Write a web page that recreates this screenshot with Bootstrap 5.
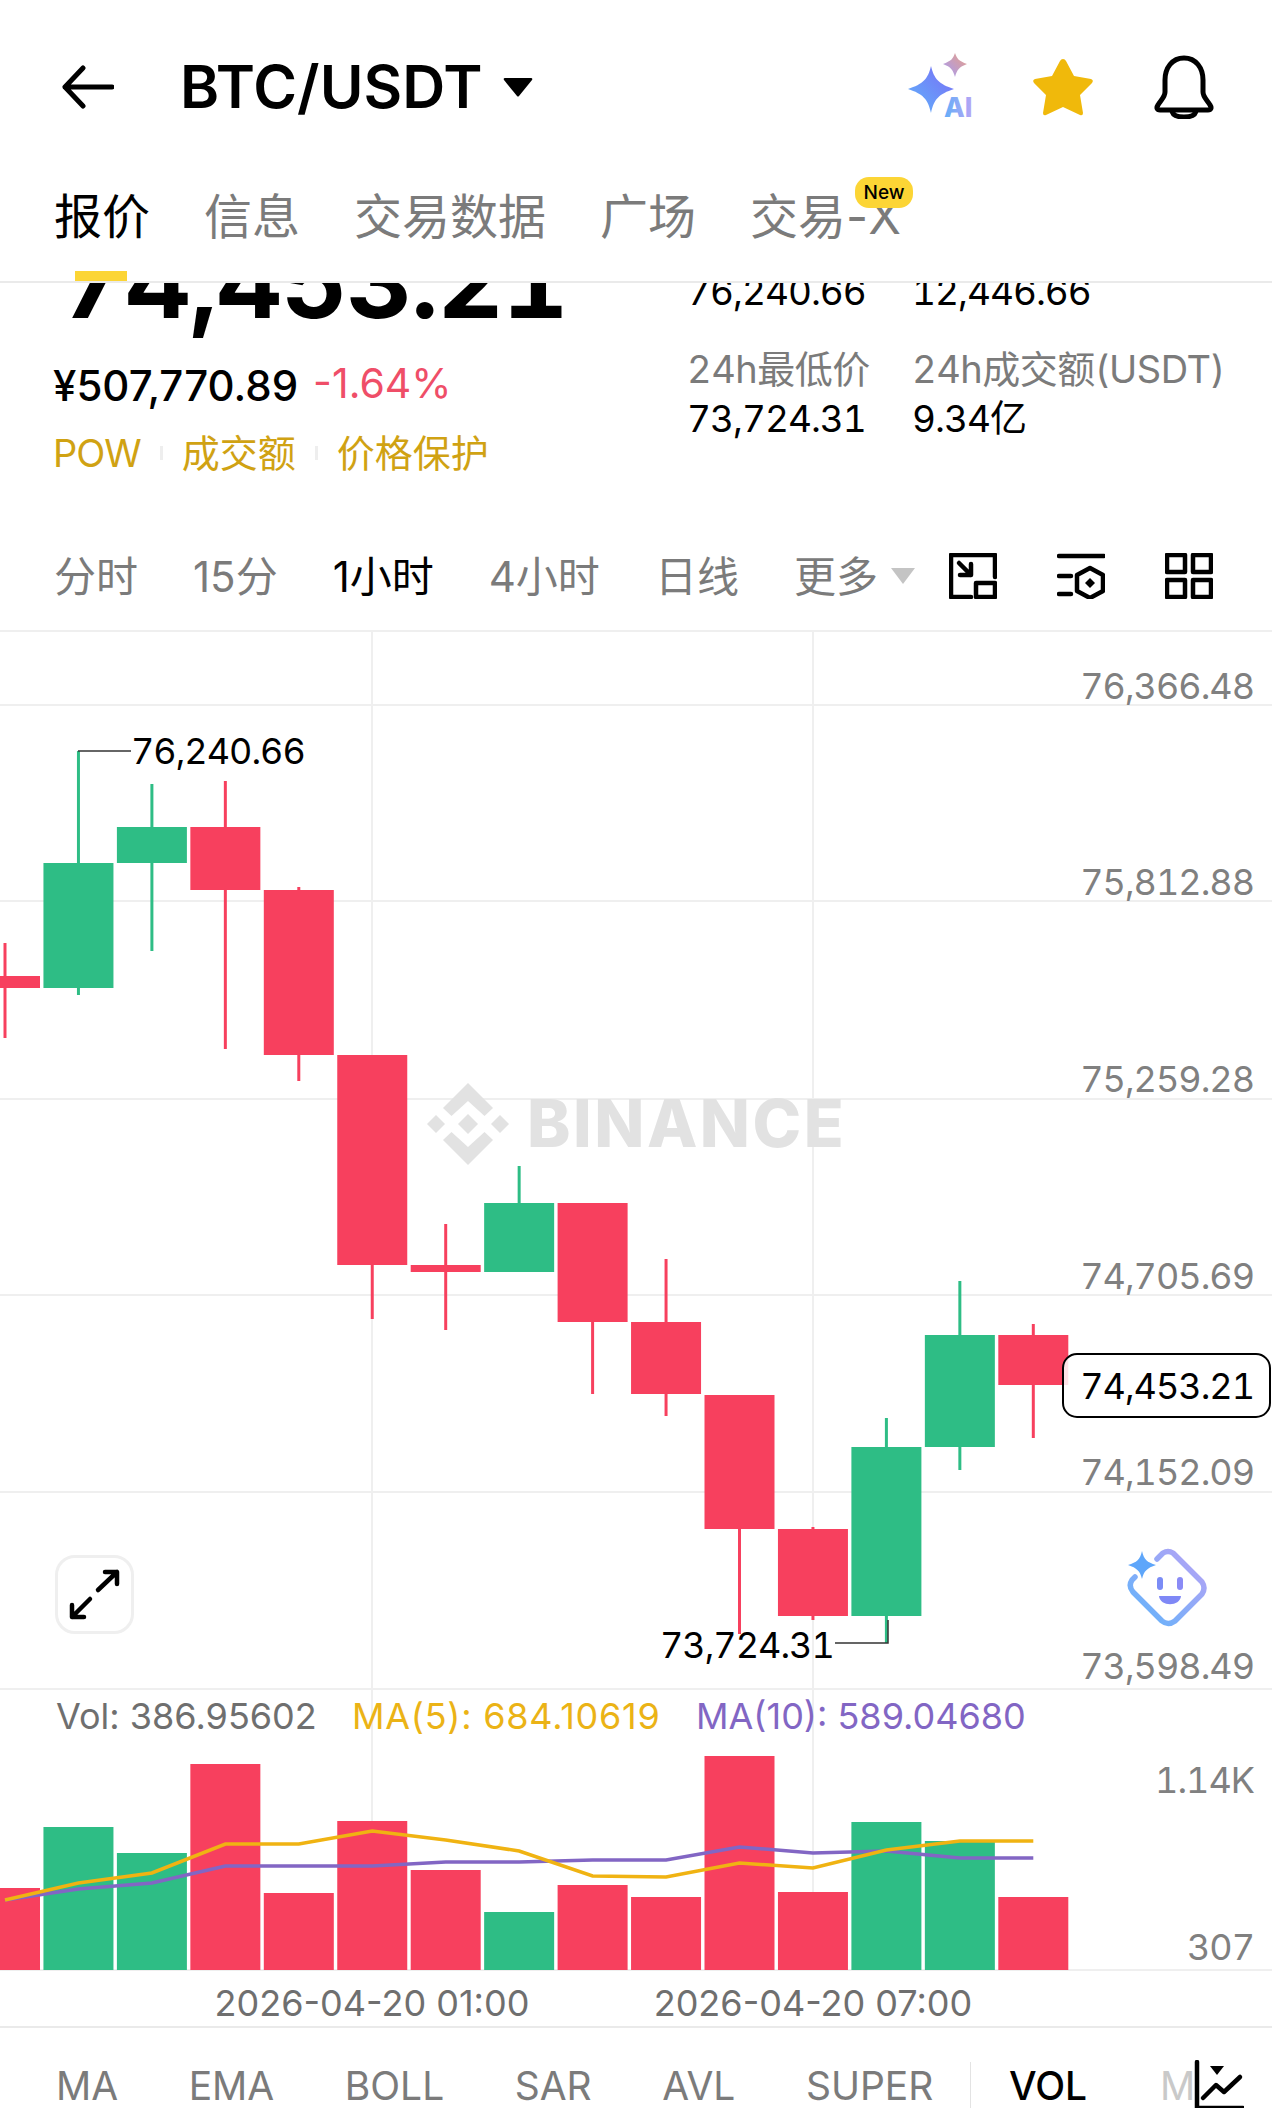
<!DOCTYPE html>
<html lang="zh">
<head>
    <meta charset="UTF-8">
    <meta name="viewport" content="width=device-width, initial-scale=1.0">
    <link href="https://cdn.jsdelivr.net/npm/bootstrap@5.3.3/dist/css/bootstrap.min.css" rel="stylesheet">
    <title>BTC/USDT</title>
    <style>
        body {
            width: 1272px;
            height: 2108px;
            overflow: hidden;
            background: #fff;
            color: #000;
            font-family: Inter, "Noto Sans CJK SC", sans-serif;
        }

        .top-bar { height: 174px; padding-left: 62px; position: relative; }
        .pair-title { font-size: 59.5px; font-weight: 600; margin-left: 66px; line-height: 1; }
        .pair-caret { margin-left: 19px; }
        .top-icons { position: absolute; right: 58px; top: 52px; gap: 60px; }
        .ai-icon { margin-right: -11px; }

        .tab-strip {
            height: 109px;
            padding: 0 54px 22px;
            gap: 54px;
            font-size: 48px;
            color: #7b7b7b;
            border-bottom: 2px solid #eaeaea;
            position: relative;
            background: #fff;
            z-index: 2;
        }
        .tab-strip .on { color: #000; }
        .tab-marker { position: absolute; left: 75px; bottom: 0; width: 52px; height: 10px; background: #fcd535; }
        .new-tag {
            position: absolute;
            left: 855px;
            top: 3px;
            width: 58px;
            height: 31px;
            border-radius: 14px;
            background: #fcd535;
            color: #000;
            font-size: 19px;
            font-weight: 500;
            line-height: 31px;
            text-align: center;
        }

        .quote { height: 237px; overflow: hidden; position: relative; }
        .quote-left { width: 636px; padding-left: 54px; }
        .big-price { font-size: 102px; font-weight: 700; line-height: 100px; margin-top: -52px; margin-left: 6px; letter-spacing: -1px; font-variant-numeric: tabular-nums; }
        .fiat-line { margin-top: 27px; height: 56px; align-items: center; }
        .fiat { font-size: 42px; font-weight: 500; line-height: 56px; margin-left: -1px; }
        .pct { font-size: 41px; color: #ef4e68; margin-left: 15px; line-height: 50px; margin-top: -6px; }
        .tag-line { margin: 11px 0 0 -1px; color: #d0a213; font-size: 38px; line-height: 56px; }
        .tag-pow { letter-spacing: -1px; }
        .tag-sep { width: 3px; height: 14px; background: #eee; margin: 0 19px; }
        .stat-grid { display: grid; grid-template-columns: 225px auto; font-size: 37px; line-height: 50px; margin: -16px 0 0 51px; align-content: start; font-variant-numeric: tabular-nums; letter-spacing: -1px; }
        .stat-label { color: #7b7b7b; margin-top: 27px; font-size: 38px; letter-spacing: -.5px; }

        .time-row { height: 110px; position: relative; font-size: 42px; color: #7b7b7b; padding: 2px 0 0 54px; }
        .time-row span.tf { margin-right: 55px; }
        .time-row .on { color: #000; }
        .time-caret { margin-left: -43px; }
        .time-icons { position: absolute; left: 949px; top: 33px; gap: 60px; }

        .chart-box { height: 1396px; position: relative; border-top: 2px solid #efefef; }
        .chart-box svg.plot { display: block; }
        .plot text { font-family: Inter, sans-serif; font-size: 36px; }
        .plot text.num { font-variant-numeric: tabular-nums; letter-spacing: -1px; }
        .plot text.wide { letter-spacing: .75px; }
        .expand-btn, .expand-arrows { position: absolute; left: 55px; top: 923px; width: 79px; height: 79px; }
        .expand-btn {
            border: 3px solid #efefef;
            border-radius: 20px;
            background: #fff;
        }
        .face-btn { position: absolute; left: 1125px; top: 915px; }

        .bottom-tabs {
            height: 82px;
            overflow: hidden;
            position: relative;
            padding: 29px 0 0 56px;
            gap: 70.5px;
            font-size: 39px;
            color: #7b7b7b;
            border-top: 2px solid #eaeaea;
            white-space: nowrap;
        }
        .bottom-tabs .on { color: #000; font-weight: 500; }
        .vol-tab { margin-left: 5px; }
        .tab-rule { position: absolute; left: 970px; top: 34px; width: 1px; height: 46px; background: #e3e3e3; }
        .fade-m { position: absolute; left: 1160px; top: 29px; color: #c9c9c9; }
        .ind-icon { position: absolute; left: 1194px; top: 32px; background: #fff; }
    </style>
</head>

<body>
    <!-- Header -->
    <div class="top-bar d-flex align-items-center">
        <svg width="52" height="44" viewBox="0 0 52 44" fill="none" stroke="#000" stroke-width="5" stroke-linecap="round" stroke-linejoin="round">
            <path d="M50 22H3M21 3 3 22l18 19"/>
        </svg>
        <span class="pair-title">BTC/USDT</span>
        <svg class="pair-caret" width="32" height="22" viewBox="0 0 32 22"><path d="M3 2h26q2 0 1 2L17 20q-1 1-2 0L2 4q-1-2 1-2z" fill="#000"/></svg>
        <div class="top-icons d-flex align-items-center">
            <svg class="ai-icon" width="76" height="70" viewBox="0 0 76 70">
                <defs>
                    <linearGradient id="gAi" x1="0" y1="1" x2="1" y2="0"><stop offset="0" stop-color="#5fb4fb"/><stop offset="1" stop-color="#7a6cf6"/></linearGradient>
                    <linearGradient id="gSm" x1="0" y1="1" x2="1" y2="0"><stop offset="0" stop-color="#a59cf8"/><stop offset="1" stop-color="#e79f86"/></linearGradient>
                    <linearGradient id="gTx" x1="0" y1="0" x2="1" y2="0"><stop offset="0" stop-color="#62aef8"/><stop offset="1" stop-color="#b7a5f5"/></linearGradient>
                </defs>
                <path d="M24 14C27 27 32 32 47 37 32 42 27 47 24 61 21 47 16 42 1 37 16 32 21 27 24 14z" fill="url(#gAi)"/>
                <path d="M48 1C50 7 52 9 60 12 52 15 50 18 48 25 46 18 44 15 36 12 44 9 46 7 48 1z" fill="url(#gSm)"/>
                <text x="37" y="65" font-size="27" font-weight="800" font-family="Inter, sans-serif" fill="url(#gTx)">AI</text>
            </svg>
            <svg width="62" height="60" viewBox="0 0 62 60"><path d="M31 2q2 0 3 2l8 15 17 3q3 1 1 4L48 38l3 18q0 3-3 2L31 50 14 58q-3 1-3-2l3-18L2 26q-2-3 1-4l17-3 8-15q1-2 3-2z" fill="#f0b90b"/></svg>
            <svg width="60" height="64" viewBox="0 0 60 64" fill="none" stroke="#000" stroke-width="5" stroke-linejoin="round">
                <path d="M30 3C18 3 11 13 11 25v12c0 5-4 8-7 13-2 3-1 5 2 5h48c3 0 4-2 2-5-3-5-7-8-7-13V25C49 13 42 3 30 3z"/>
                <path d="M18 55c0 5 5 7 12 7s12-2 12-7"/>
            </svg>
        </div>
    </div>

    <!-- Tabs -->
    <div class="tab-strip d-flex align-items-center">
        <span class="on">报价</span>
        <span>信息</span>
        <span>交易数据</span>
        <span>广场</span>
        <span>交易-X</span>
        <span class="new-tag">New</span>
        <div class="tab-marker"></div>
    </div>

    <!-- Price summary, scrolled partly under the tabs -->
    <div class="quote d-flex">
        <div class="quote-left">
            <div class="big-price">74,453.21</div>
            <div class="fiat-line d-flex">
                <span class="fiat">¥507,770.89</span>
                <span class="pct">-1.64%</span>
            </div>
            <div class="tag-line d-flex align-items-center">
                <span class="tag-pow">POW</span><span class="tag-sep"></span><span>成交额</span><span class="tag-sep"></span><span>价格保护</span>
            </div>
        </div>
        <div class="stat-grid">
            <div>76,240.66</div><div>12,446.66</div>
            <div class="stat-label">24h最低价</div><div class="stat-label">24h成交额(USDT)</div>
            <div>73,724.31</div><div>9.34亿</div>
        </div>
    </div>

    <!-- Intervals -->
    <div class="time-row d-flex align-items-center">
        <span class="tf">分时</span>
        <span class="tf">15分</span>
        <span class="tf on">1小时</span>
        <span class="tf">4小时</span>
        <span class="tf">日线</span>
        <span class="tf">更多</span>
        <svg class="time-caret" width="26" height="18" viewBox="0 0 26 18"><path d="M1 1h24L13 17z" fill="#c4c4c4"/></svg>
        <div class="time-icons d-flex">
            <svg width="48" height="46" viewBox="0 0 48 46" fill="none" stroke="#000" stroke-width="4.5" stroke-linejoin="round" stroke-linecap="round">
                <path d="M46 24V2H2v42h20"/>
                <rect x="27" y="30" width="19" height="14"/>
                <path d="M10 10l12 12M22 11v11H11"/>
            </svg>
            <svg width="48" height="46" viewBox="0 0 48 46" fill="none" stroke="#000" stroke-width="4.5" stroke-linejoin="round" stroke-linecap="round">
                <path d="M2 3h45M2 23h12M2 41h12"/>
                <path d="M33 15l13 7v16l-13 7-13-7V22z"/>
                <path d="M33 25l5 5-5 5-5-5z" fill="#000" stroke="none"/>
            </svg>
            <svg width="48" height="46" viewBox="0 0 48 46" fill="none" stroke="#000" stroke-width="4.5" stroke-linejoin="round">
                <rect x="2" y="2" width="18" height="17"/><rect x="28" y="2" width="18" height="17"/>
                <rect x="2" y="27" width="18" height="17"/><rect x="28" y="27" width="18" height="17"/>
            </svg>
        </div>
    </div>

    <!-- Chart -->
    <div class="chart-box">
        <svg class="plot" id="plot" width="1272" height="1394" viewBox="0 632 1272 1394"></svg>
        <div class="expand-btn"></div>
        <svg class="expand-arrows" viewBox="55 1555 79 79" fill="none" stroke="#000" stroke-width="4.5" stroke-linecap="round" stroke-linejoin="round">
            <path d="M98 1590l19-18M105 1572h12v12M90 1599l-18 18M72 1605v12h12"/>
        </svg>
        <svg class="face-btn" width="84" height="84" viewBox="1125 1547 84 84" fill="none">
            <defs><linearGradient id="gFace" x1="0" y1="1" x2="1" y2="0"><stop offset="0" stop-color="#5fb4fb"/><stop offset="1" stop-color="#b9a2f5"/></linearGradient></defs>
            <path d="M1157 1559l6-6q5-3 10 0l29 29q4 6 0 12l-27 27q-7 5-13 0l-29-29q-5-6-1-12l3-3" stroke="url(#gFace)" stroke-width="5.5" stroke-linecap="round" stroke-linejoin="round"/>
            <path d="M1142 1551c2 9 5 11 14 14-9 3-12 6-14 14-2-8-5-11-14-14 9-3 12-5 14-14z" fill="#5ea6fa"/>
            <rect x="1157" y="1577" width="6" height="13" rx="3" fill="#7b8cf6"/>
            <rect x="1177" y="1577" width="6" height="13" rx="3" fill="#8a8bf6"/>
            <path d="M1159 1596h22c-1 11-21 11-22 0z" fill="#7f88f6"/>
        </svg>
    </div>

    <!-- Indicators -->
    <div class="bottom-tabs d-flex">
        <span>MA</span>
        <span>EMA</span>
        <span>BOLL</span>
        <span>SAR</span>
        <span>AVL</span>
        <span>SUPER</span>
        <span class="tab-rule"></span>
        <span class="on vol-tab">VOL</span>
        <span class="fade-m">M</span>
        <svg class="ind-icon" width="50" height="50" viewBox="0 0 50 50" fill="none" stroke="#000" stroke-width="4.5" stroke-linecap="round" stroke-linejoin="round">
            <path d="M3 2v46h46"/>
            <path d="M16 6h14l-7 9z" fill="#000" stroke="none"/>
            <path d="M9 38l13-13 8 7 16-15"/>
        </svg>
    </div>

    <script>
        const RED = '#f7405e', GREEN = '#2ebd85', GRID = '#efefef', AXIS = '#808080';
        // [color, body top, body bottom, wick top, wick bottom] measured on the shot
        const candles = [
            ['r', 976, 988, 943, 1038], ['g', 863, 988, 751, 995], ['g', 827, 863, 784, 951],
            ['r', 827, 890, 781, 1049], ['r', 890, 1055, 887, 1081], ['r', 1055, 1265, 1055, 1319],
            ['r', 1265, 1272, 1224, 1330], ['g', 1203, 1272, 1166, 1272], ['r', 1203, 1322, 1203, 1394],
            ['r', 1322, 1394, 1259, 1416], ['r', 1395, 1529, 1395, 1634], ['r', 1529, 1616, 1527, 1620],
            ['g', 1447, 1616, 1418, 1643], ['g', 1335, 1447, 1281, 1470], ['r', 1335, 1385, 1324, 1438]
        ];
        const volTops = [1888, 1827, 1853, 1764, 1893, 1821, 1870, 1912, 1885, 1897, 1756, 1892, 1822, 1841, 1897];
        const ma5 = [1900, 1883, 1873, 1844, 1844, 1831, 1840, 1851, 1876, 1877, 1863, 1868, 1850, 1841, 1841];
        const ma10 = [1900, 1889, 1883, 1866, 1866, 1866, 1862, 1862, 1860, 1860, 1847, 1853, 1851, 1858, 1858];
        const centerX = i => 5 + i * 73.45;
        const BASE = 1970, BODY_W = 70;

        let s = '';
        const line = (x1, y1, x2, y2, c, w) => `<line x1="${x1}" y1="${y1}" x2="${x2}" y2="${y2}" stroke="${c}" stroke-width="${w}"/>`;
        const text = (x, y, t, c, a, cls) => `<text class="${cls || ''}" x="${x}" y="${y}" fill="${c}" text-anchor="${a || 'start'}">${t}</text>`;

        // grid
        [705, 901, 1099, 1295, 1492, 1689, 1970].forEach(y => s += line(0, y, 1272, y, GRID, 2));
        [372, 813].forEach(x => s += line(x, 630, x, 1970, GRID, 2));

        // watermark
        s += `<g fill="#e2e2e2" transform="translate(468 1124)">
            <path d="M0-41 25-16 16.500-8 0-23-16.500-8-25-16z"/><path d="M0 41 25 16 16.500 8 0 23-16.500 8-25 16z"/>
            <path d="M-41 0-32-9-23 0-32 9z"/><path d="M41 0 32-9 23 0 32 9z"/><path d="M0-10 10 0 0 10-10 0z"/></g>`;
        s += `<text x="527" y="1147" fill="#e2e2e2" style="font-size:65.5px;font-weight:800;letter-spacing:2.5px">BINANCE</text>`;

        // candles and volume
        candles.forEach((c, i) => {
            const col = c[0] === 'r' ? RED : GREEN, x = centerX(i);
            s += line(x, c[3], x, c[4], col, 3);
            s += `<rect x="${x - BODY_W / 2}" y="${c[1]}" width="${BODY_W}" height="${c[2] - c[1]}" fill="${col}"/>`;
            s += `<rect x="${x - BODY_W / 2}" y="${volTops[i]}" width="${BODY_W}" height="${BASE - volTops[i]}" fill="${col}"/>`;
        });
        const poly = (ys, c) => `<polyline fill="none" stroke="${c}" stroke-width="3.5" points="${ys.map((y, i) => centerX(i) + ',' + y).join(' ')}"/>`;
        s += poly(ma10, '#8266c4') + poly(ma5, '#f0b312');

        // high / low callouts
        s += line(78, 751, 131, 751, '#333', 1.5);
        s += text(131, 764, '76,240.66', '#000', 'start', 'num');
        s += `<path d="M835 1643H888V1620" stroke="#333" stroke-width="1.5" fill="none"/>`;
        s += text(660, 1658, '73,724.31', '#000', 'start', 'num');

        // axis
        [['76,366.48', 699], ['75,812.88', 895], ['75,259.28', 1092], ['74,705.69', 1289], ['74,152.09', 1485], ['73,598.49', 1679],
         ['1.14K', 1793], ['307', 1960]].forEach(a => s += text(1254, a[1], a[0], AXIS, 'end', 'num'));

        // live price
        s += `<rect x="1063" y="1354" width="207" height="63" rx="14" fill="rgba(255,255,255,.85)" stroke="#000" stroke-width="2"/>`;
        s += text(1254, 1399, '74,453.21', '#000', 'end', 'num');

        // volume legend and dates
        s += text(56, 1729, 'Vol: 386.95602', '#6f6f6f');
        s += text(352, 1729, 'MA(5): 684.10619', '#ebb316', 'start', 'wide');
        s += text(696, 1729, 'MA(10): 589.04680', '#8266c4');
        s += text(372, 2016, '2026-04-20 01:00', '#6f6f6f', 'middle');
        s += text(813, 2016, '2026-04-20 07:00', '#6f6f6f', 'middle');

        document.getElementById('plot').innerHTML = s;
    </script>
    <script src="https://cdn.jsdelivr.net/npm/bootstrap@5.3.3/dist/js/bootstrap.bundle.min.js"></script>
</body>

</html>
